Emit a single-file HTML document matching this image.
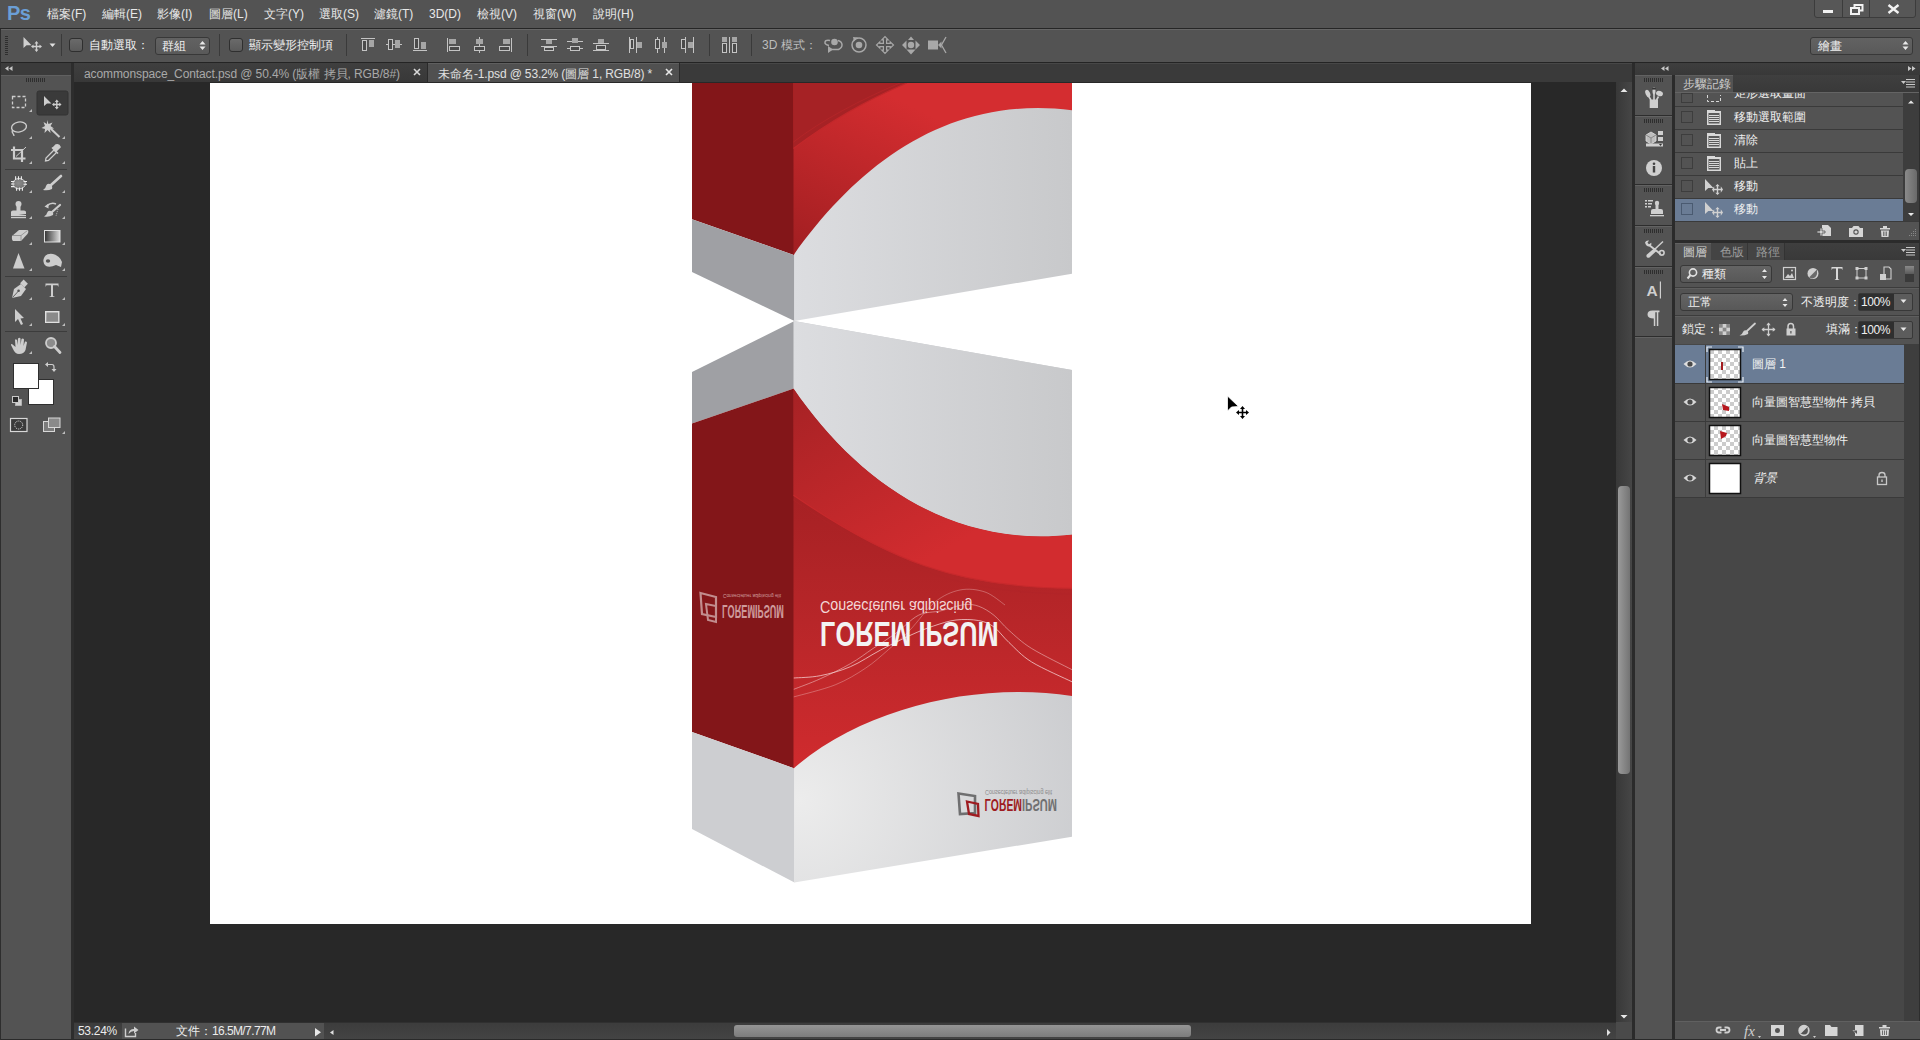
<!DOCTYPE html>
<html><head><meta charset="utf-8">
<style>
*{margin:0;padding:0;box-sizing:border-box}
html,body{width:1920px;height:1040px;overflow:hidden;background:#535353;font-family:"Liberation Sans",sans-serif;color:#e6e6e6}
.a{position:absolute}
.t{position:absolute;white-space:nowrap;font-size:12px;line-height:14px}
.k{display:inline-block;width:1em;text-align:center}
</style></head><body>
<!-- menu bar -->
<div class="a" style="left:0;top:0;width:1920px;height:28px;background:#535353"></div>
<div class="a" style="left:0;top:28px;width:1920px;height:1px;background:#262626"></div>
<!-- options bar -->
<div class="a" style="left:0;top:29px;width:1920px;height:33px;background:#535353;border-top:1px solid #666"></div>
<div class="a" style="left:0;top:62px;width:1920px;height:1px;background:#242424"></div>
<!-- MENU CONTENT -->
<div class="t" style="left:7px;top:2px;font-size:20px;line-height:22px;font-weight:bold;color:#6b9fd6;letter-spacing:-0.5px">Ps</div>
<div class="t" style="left:47px;top:7px;color:#e8e8e8"><span class="k">檔</span><span class="k">案</span>(F)</div>
<div class="t" style="left:102px;top:7px;color:#e8e8e8"><span class="k">編</span><span class="k">輯</span>(E)</div>
<div class="t" style="left:157px;top:7px;color:#e8e8e8"><span class="k">影</span><span class="k">像</span>(I)</div>
<div class="t" style="left:209px;top:7px;color:#e8e8e8"><span class="k">圖</span><span class="k">層</span>(L)</div>
<div class="t" style="left:264px;top:7px;color:#e8e8e8"><span class="k">文</span><span class="k">字</span>(Y)</div>
<div class="t" style="left:319px;top:7px;color:#e8e8e8"><span class="k">選</span><span class="k">取</span>(S)</div>
<div class="t" style="left:374px;top:7px;color:#e8e8e8"><span class="k">濾</span><span class="k">鏡</span>(T)</div>
<div class="t" style="left:429px;top:7px;color:#e8e8e8">3D(D)</div>
<div class="t" style="left:477px;top:7px;color:#e8e8e8"><span class="k">檢</span><span class="k">視</span>(V)</div>
<div class="t" style="left:533px;top:7px;color:#e8e8e8"><span class="k">視</span><span class="k">窗</span>(W)</div>
<div class="t" style="left:593px;top:7px;color:#e8e8e8"><span class="k">說</span><span class="k">明</span>(H)</div>
<!-- window controls -->
<div class="a" style="left:1814px;top:-2px;width:102px;height:20px;background:#575757;border:1px solid #3c3c3c;border-radius:0 0 3px 3px"></div>
<div class="a" style="left:1842px;top:0;width:1px;height:18px;background:#3c3c3c"></div>
<div class="a" style="left:1869px;top:0;width:1px;height:18px;background:#3c3c3c"></div>
<div class="a" style="left:1823px;top:10px;width:10px;height:3px;background:#f2f2f2"></div>
<svg class="a" style="left:1850px;top:4px" width="14" height="11" viewBox="0 0 14 11"><rect x="4.5" y="1" width="8" height="5.5" fill="none" stroke="#f2f2f2" stroke-width="2"/><rect x="1" y="4" width="8" height="6" fill="#575757" stroke="#f2f2f2" stroke-width="2"/></svg>
<svg class="a" style="left:1887px;top:4px" width="13" height="10" viewBox="0 0 13 10"><path d="M1.5,1 L11.5,9 M11.5,1 L1.5,9" stroke="#f2f2f2" stroke-width="2.4"/></svg>
<!-- OPTIONS CONTENT -->
<div class="a" style="left:5px;top:36px;width:3px;height:20px;background:repeating-linear-gradient(#2e2e2e 0 1px,transparent 1px 2px)"></div>
<svg class="a" style="left:22px;top:36px" width="22" height="16" viewBox="0 0 22 16"><path d="M1.5,1 L1.5,12 L4.5,9.3 L9.5,9.3 Z" fill="#cfcfcf"/><path d="M14.5,5 L16.5,7.5 L15.2,7.5 L15.2,9.8 L17.5,9.8 L17.5,8.5 L20,10.5 L17.5,12.5 L17.5,11.2 L15.2,11.2 L15.2,13.5 L16.5,13.5 L14.5,16 L12.5,13.5 L13.8,13.5 L13.8,11.2 L11.5,11.2 L11.5,12.5 L9,10.5 L11.5,8.5 L11.5,9.8 L13.8,9.8 L13.8,7.5 L12.5,7.5 Z" fill="#cfcfcf"/></svg>
<svg class="a" style="left:49px;top:43px" width="7" height="5" viewBox="0 0 7 5"><path d="M0.5,0.5 L6.5,0.5 L3.5,4 Z" fill="#e0e0e0"/></svg>
<div class="a" style="left:61px;top:34px;width:1px;height:22px;background:#3a3a3a"></div>
<div class="a" style="left:69px;top:38px;width:14px;height:14px;background:linear-gradient(#6a6a6a,#5a5a5a);border:1px solid #2f2f2f;border-radius:3px"></div>
<div class="t" style="left:89px;top:38px;color:#f0f0f0"><span class="k">自</span><span class="k">動</span><span class="k">選</span><span class="k">取</span><span class="k">：</span></div>
<div class="a" style="left:155px;top:37px;width:55px;height:18px;background:linear-gradient(#626262,#595959);border:1px solid #383838;border-radius:3px"></div>
<div class="t" style="left:162px;top:39px;color:#f0f0f0"><span class="k">群</span><span class="k">組</span></div>
<svg class="a" style="left:199px;top:40px" width="7" height="11" viewBox="0 0 7 11"><path d="M0.5,4.5 L3.5,1 L6.5,4.5 Z M0.5,6.5 L3.5,10 L6.5,6.5 Z" fill="#e8e8e8"/></svg>
<div class="a" style="left:219px;top:34px;width:1px;height:22px;background:#3a3a3a"></div>
<div class="a" style="left:229px;top:38px;width:14px;height:14px;background:linear-gradient(#6a6a6a,#5a5a5a);border:1px solid #2f2f2f;border-radius:3px"></div>
<div class="t" style="left:249px;top:38px;color:#f0f0f0"><span class="k">顯</span><span class="k">示</span><span class="k">變</span><span class="k">形</span><span class="k">控</span><span class="k">制</span><span class="k">項</span></div>
<div class="a" style="left:346px;top:34px;width:1px;height:22px;background:#3a3a3a"></div>
<div class="a" style="left:527px;top:34px;width:1px;height:22px;background:#3a3a3a"></div>
<div class="a" style="left:709px;top:34px;width:1px;height:22px;background:#3a3a3a"></div>
<div class="a" style="left:751px;top:34px;width:1px;height:22px;background:#3a3a3a"></div>
<div class="t" style="left:762px;top:38px;color:#bdbdbd">3D <span class="k">模</span><span class="k">式</span><span class="k">：</span></div>
<div class="a" style="left:1810px;top:37px;width:103px;height:18px;background:linear-gradient(#626262,#595959);border:1px solid #383838;border-radius:3px"></div>
<div class="t" style="left:1818px;top:39px;color:#f0f0f0"><span class="k">繪</span><span class="k">畫</span></div>
<svg class="a" style="left:1902px;top:40px" width="7" height="11" viewBox="0 0 7 11"><path d="M0.5,4.5 L3.5,1 L6.5,4.5 Z M0.5,6.5 L3.5,10 L6.5,6.5 Z" fill="#e8e8e8"/></svg>
<!-- ALIGN ICONS -->
<svg class="a" style="left:355px;top:30px" width="400" height="30" viewBox="355 30 400 30" shape-rendering="crispEdges">
<g fill="none" stroke="#c4c4c4" stroke-width="1">
<!-- 1 align top -->
<line x1="361" y1="38.5" x2="375" y2="38.5"/><rect x="362.5" y="40.5" width="4" height="10" fill="#4a4a4a"/>
<!-- 2 v center -->
<line x1="386" y1="44.5" x2="402" y2="44.5"/><rect x="388.5" y="39.5" width="4" height="10" fill="#4a4a4a"/>
<!-- 3 bottom -->
<line x1="413" y1="50.5" x2="427" y2="50.5"/><rect x="414.5" y="38.5" width="4" height="10" fill="#4a4a4a"/>
<!-- 4 left -->
<line x1="447.5" y1="38" x2="447.5" y2="52"/><rect x="449.5" y="46.5" width="10" height="4" fill="#4a4a4a"/>
<!-- 5 h center -->
<line x1="479.5" y1="37" x2="479.5" y2="53"/><rect x="474.5" y="46.5" width="10" height="4" fill="#4a4a4a"/>
<!-- 6 right -->
<line x1="511.5" y1="38" x2="511.5" y2="52"/><rect x="499.5" y="46.5" width="10" height="4" fill="#4a4a4a"/>
<!-- 7 dist top -->
<line x1="541" y1="39.5" x2="557" y2="39.5"/><line x1="541" y1="46.5" x2="557" y2="46.5"/><rect x="544.5" y="47.5" width="9" height="3" fill="#4a4a4a"/>
<line x1="567" y1="41.5" x2="583" y2="41.5"/><line x1="567" y1="48.5" x2="583" y2="48.5"/><rect x="570.5" y="46.5" width="9" height="4" fill="#4a4a4a"/>
<line x1="593" y1="43.5" x2="609" y2="43.5"/><line x1="593" y1="50.5" x2="609" y2="50.5"/><rect x="596.5" y="45.5" width="9" height="4" fill="#4a4a4a"/>
<!-- dist h -->
<line x1="629.5" y1="37" x2="629.5" y2="53"/><line x1="636.5" y1="37" x2="636.5" y2="53"/><rect x="630.5" y="39.5" width="3" height="9" fill="#4a4a4a"/>
<line x1="657.5" y1="37" x2="657.5" y2="53"/><line x1="664.5" y1="37" x2="664.5" y2="53"/><rect x="655.5" y="39.5" width="4" height="9" fill="#4a4a4a"/>
<line x1="685.5" y1="37" x2="685.5" y2="53"/><line x1="693.5" y1="37" x2="693.5" y2="53"/><rect x="681.5" y="39.5" width="4" height="9" fill="#4a4a4a"/>
<!-- auto align -->
<rect x="722.5" y="43.5" width="4" height="9" fill="#4a4a4a"/><rect x="732.5" y="43.5" width="4" height="9" fill="#4a4a4a"/><line x1="729.5" y1="37" x2="729.5" y2="53"/>
</g>
<g fill="#a6a6a6">
<rect x="369" y="40" width="5" height="7"/>
<rect x="395" y="40" width="5" height="8"/>
<rect x="421" y="42" width="5" height="7"/>
<rect x="449" y="39" width="7" height="5"/>
<rect x="476" y="39" width="7" height="5"/>
<rect x="503" y="39" width="7" height="5"/>
<rect x="546" y="40" width="6" height="4"/>
<rect x="572" y="38" width="6" height="5"/>
<rect x="598" y="39" width="6" height="4"/>
<rect x="637" y="42" width="5" height="6"/>
<rect x="662" y="42" width="5" height="6"/>
<rect x="688" y="42" width="5" height="6"/>
<rect x="722" y="37" width="5" height="5"/><rect x="732" y="37" width="5" height="5"/>
</g>
</svg>
<svg class="a" style="left:820px;top:34px" width="130" height="22" viewBox="820 34 130 22">
<g fill="none" stroke="#a8a8a8" stroke-width="1.5">
<path d="M829,45.5 C823,44 824,39.5 830,40.5 M838,40.5 C843,42 843.5,47 838.5,49.5 L831,49.5"/>
<circle cx="859" cy="45" r="7"/>
<path d="M883.4,43.4 L883.4,39.8 L881.8,39.8 L885.0,36.5 L888.2,39.8 L886.6,39.8 L886.6,43.4 L890.2,43.4 L890.2,41.8 L893.5,45.0 L890.2,48.2 L890.2,46.6 L886.6,46.6 L886.6,50.2 L888.2,50.2 L885.0,53.5 L881.8,50.2 L883.4,50.2 L883.4,46.6 L879.8,46.6 L879.8,48.2 L876.5,45.0 L879.8,41.8 L879.8,43.4 Z" stroke-width="1.2"/>
</g>
<g fill="#a8a8a8">
<circle cx="834.5" cy="42" r="3.3"/><path d="M828,46 L833,49.5 L828,53 Z"/>
<circle cx="859" cy="45" r="3.3"/><path d="M853,37 L858,37.5 L854,41.5 Z"/>
<circle cx="911" cy="45" r="3.2"/><path d="M902,45 L906.5,40.5 L906.5,49.5 Z M920,45 L915.5,40.5 L915.5,49.5 Z M911,36.5 L908,40 L914,40 Z M911,54.5 L906.5,49.5 L915.5,49.5 Z"/>
<rect x="928" y="40.5" width="10" height="9"/><path d="M938,45 L941.5,41.5 L941.5,48.5 Z"/><path d="M946,37 L941.5,45 L946,53" fill="none" stroke="#a8a8a8" stroke-width="1.3"/>
</g>
</svg>
<!-- main area dark -->
<div class="a" style="left:0;top:63px;width:1920px;height:977px;background:#2d2d2d"></div>
<!-- left toolbar -->
<div class="a" style="left:0;top:63px;width:71px;height:12px;background:#3b3b3b"></div>
<div class="a" style="left:1px;top:75px;width:70px;height:965px;background:#535353;border-top:1px solid #606060"></div>
<!-- TOOLBAR ICONS -->
<svg class="a" style="left:0;top:63px" width="72" height="380" viewBox="0 63 72 380">
<defs>
<linearGradient id="tg" x1="0" y1="0" x2="0" y2="1"><stop offset="0" stop-color="#dedede"/><stop offset="1" stop-color="#b4b4b4"/></linearGradient>
<linearGradient id="tg2" x1="0" y1="0" x2="1" y2="0"><stop offset="0" stop-color="#333"/><stop offset="1" stop-color="#ddd"/></linearGradient>
</defs>
<!-- header arrows -->
<path d="M8.5,66 L5,68.5 L8.5,71 Z M12.5,66 L9,68.5 L12.5,71 Z" fill="#c8c8c8"/>
<!-- grip -->
<g fill="#2e2e2e"><rect x="26" y="78" width="19" height="4" fill="url(#grip)"/></g>
<!-- separators -->
<rect x="5" y="169" width="62" height="1" fill="#3c3c3c"/>
<rect x="5" y="276" width="62" height="1" fill="#3c3c3c"/>
<rect x="5" y="331" width="62" height="1" fill="#3c3c3c"/>
<!-- selected move bg -->
<rect x="37" y="91" width="31" height="24" rx="2" fill="#3a3a3a" stroke="#333" stroke-width="1"/>
<!-- marquee -->
<rect x="12.5" y="96.5" width="13" height="11" fill="none" stroke="#cdcdcd" stroke-width="1.3" stroke-dasharray="3,2"/>
<!-- move -->
<path d="M44,96 L44,106 L47,103.5 L51.5,103.5 Z" fill="#cdcdcd"/>
<path d="M56.8,99.5 L58.8,102 L57.5,102 L57.5,103.8 L59.3,103.8 L59.3,102.5 L61.5,104.5 L59.3,106.5 L59.3,105.2 L57.5,105.2 L57.5,107 L58.8,107 L56.8,109.5 L54.8,107 L56.1,107 L56.1,105.2 L54.3,105.2 L54.3,106.5 L52,104.5 L54.3,102.5 L54.3,103.8 L56.1,103.8 L56.1,102 L54.8,102 Z" fill="#cdcdcd"/>
<!-- lasso -->
<ellipse cx="19" cy="127" rx="7.5" ry="5" fill="none" stroke="#cdcdcd" stroke-width="1.4" transform="rotate(-10 19 127)"/>
<path d="M12.5,130 C11,133 14,133 14,136" fill="none" stroke="#cdcdcd" stroke-width="1.3"/>
<!-- wand -->
<path d="M49,127 L59.5,137" stroke="#cdcdcd" stroke-width="2"/>
<path d="M47,120 L48.5,124 L52.5,122.5 L50.5,126 L54,128.5 L50,129 L50.5,133 L47.5,130 L44.5,133 L45,129 L41.5,128 L45,126 L43.5,122 L47,124 Z" fill="#cdcdcd"/>
<!-- crop -->
<path d="M14,146.5 L14,158.5 L25.5,158.5 M11,150 L22,150 L22,162" fill="none" stroke="#cdcdcd" stroke-width="2.2"/>
<path d="M16,156.5 L26,147" stroke="#cdcdcd" stroke-width="1"/>
<!-- eyedropper -->
<path d="M45.5,161 L46,158 L54,150 L56.5,152.5 L48.5,160.5 Z" fill="none" stroke="#cdcdcd" stroke-width="1.3"/>
<path d="M53,148 L56,145 Q59,144 60,147 L57,150 Z M52,147.5 L58,153.5" fill="#cdcdcd" stroke="#cdcdcd" stroke-width="1.6"/>
<!-- healing -->
<defs><radialGradient id="hg" cx="0.45" cy="0.45" r="0.6"><stop offset="0" stop-color="#8c8c8c"/><stop offset="1" stop-color="#707070"/></radialGradient></defs>
<ellipse cx="19.1" cy="183.7" rx="6.3" ry="5.2" fill="url(#hg)" stroke="#d0d0d0" stroke-width="1"/>
<path d="M15.6,176.3 L15.6,179.8 M18.5,176.3 L18.5,179.8 M21.4,176.3 L21.4,179.8 M16.6,187.6 L16.6,190.8 M19.5,187.6 L19.5,190.8 M22.4,187.6 L22.4,190.8 M11,181.5 L14.5,181.5 M11,184 L14.5,184 M11,186.6 L14.5,186.6 M23.5,181.5 L27,181.5 M23.5,184.3 L27,184.3" stroke="#eeeeee" stroke-width="1.1"/>
<!-- brush -->
<path d="M61,176 L51,185" stroke="#cdcdcd" stroke-width="2.6" stroke-linecap="round"/>
<path d="M50,184 Q53,186 52,189 Q48,191 43,190 Q46,188 46,186 Q47,183 50,184 Z" fill="#cdcdcd"/>
<!-- stamp -->
<circle cx="18.5" cy="204" r="3" fill="#cdcdcd"/><rect x="16.5" y="205" width="4" height="6" fill="#cdcdcd"/>
<path d="M11,216 L11,212 Q11,210.5 13,210.5 L24,210.5 Q26,210.5 26,212 L26,214 Z" fill="#cdcdcd"/>
<rect x="11" y="215" width="15" height="1.2" fill="#cdcdcd"/><rect x="11" y="217" width="15" height="1.2" fill="#cdcdcd"/>
<!-- history brush -->
<path d="M47,206 Q51,202 56,204" fill="none" stroke="#cdcdcd" stroke-width="1.5"/><path d="M44.5,206.5 L48.5,203.5 L48.5,208.5 Z" fill="#cdcdcd"/>
<path d="M60,205 L52,212" stroke="#cdcdcd" stroke-width="2.2" stroke-linecap="round"/>
<path d="M51,211 Q54,212.5 53,215 Q49,217.5 44,216.5 Q47,214.5 47,213 Q48,210 51,211 Z" fill="#cdcdcd"/>
<path d="M58,209 L56,216" stroke="#cdcdcd" stroke-width="0.8" stroke-dasharray="1,1"/>
<!-- eraser -->
<path d="M12,236 L19,230 L28,230 Q29,232 27.5,234 L21,241 L13,241 Q11.5,240 12,236 Z" fill="#cdcdcd"/>
<path d="M13,235.5 L21,235.5 L27.5,230.5 M21,235.5 L21,241" fill="none" stroke="#8a8a8a" stroke-width="0.8"/>
<!-- gradient -->
<rect x="44.5" y="230.5" width="15.5" height="11.5" fill="url(#tg2)" stroke="#e0e0e0" stroke-width="1"/>
<!-- blur triangle -->
<path d="M18.5,253 L24.5,268.5 L13,268.5 Z" fill="#cdcdcd"/>
<!-- dodge/smudge -->
<path d="M44,258 Q46,253 53,254 Q60,256 62,262 L61,267 L56,265 Q50,268 46,266 Q42,263 44,258 Z" fill="#cdcdcd"/>
<ellipse cx="48" cy="261" rx="2.2" ry="1.8" fill="#535353"/>
<!-- pen -->
<path d="M12,298 L14,289 L21,284 L26,289 L21,296 Z" fill="#cdcdcd"/>
<rect x="21" y="281" width="6" height="5" transform="rotate(45 24 283.5)" fill="#cdcdcd"/>
<path d="M12.5,297.5 L18.5,291" stroke="#535353" stroke-width="0.9"/><circle cx="18.6" cy="290.8" r="1.3" fill="#535353"/>
<!-- type T -->
<path d="M45.5,283.5 L58.5,283.5 L58.5,287 L57.5,285.3 L53,285.3 L53,296 L55,297 L49,297 L51,296 L51,285.3 L46.5,285.3 L45.5,287 Z" fill="#cdcdcd"/>
<!-- path select -->
<path d="M15,309 L15,322 L18,319 L21,325 L23,324 L20.5,318.5 L24,318 Z" fill="#cdcdcd"/>
<!-- rect shape -->
<rect x="45.5" y="311.5" width="13.5" height="11" fill="url(#tg)" stroke="#e0e0e0" stroke-width="1"/>
<rect x="46.5" y="312.5" width="11.5" height="9" fill="#8a8a8a"/>
<!-- hand -->
<path d="M12,344 L15.5,347 L15,340 Q15.5,338.5 17,340 L17.5,345 L18,338.5 Q19.5,337 20.5,338.5 L20.5,345 L21.5,339 Q23,338 24,339.5 L23.5,346 L25,341.5 Q26.5,341 27,342.5 L25.5,350 Q24,354 19,354 Q15,354 13,349 L11,345 Q11,343.5 12,344 Z" fill="#cdcdcd"/>
<!-- zoom -->
<circle cx="51" cy="343" r="5" fill="#8c8c8c" stroke="#cdcdcd" stroke-width="1.8"/>
<path d="M54.5,346.5 L60,352.5" stroke="#cdcdcd" stroke-width="2.8" stroke-linecap="round"/>
<!-- colors -->
<rect x="28.5" y="379.5" width="25" height="25" fill="#fff" stroke="#2f2f2f" stroke-width="1"/>
<rect x="13.5" y="363.5" width="25" height="25" fill="#fff" stroke="#2f2f2f" stroke-width="1"/>
<path d="M46,364.5 L52,364.5 Q54,364.5 54,367 L54,370" fill="none" stroke="#cdcdcd" stroke-width="1.2"/>
<path d="M45,364.5 L48,362 L48,367 Z M54,372 L51.5,369 L56.5,369 Z" fill="#cdcdcd"/>
<rect x="15.5" y="399.5" width="6" height="6" fill="#d0d0d0" stroke="#bbb" stroke-width="0.8"/>
<rect x="12.5" y="396.5" width="6" height="6" fill="#2a2a2a" stroke="#c8c8c8" stroke-width="1"/>
<!-- quick mask -->
<rect x="10.5" y="418.5" width="16.5" height="13" fill="#3a3a3a" stroke="#d8d8d8" stroke-width="1.2"/>
<circle cx="18.7" cy="425" r="4" fill="none" stroke="#e8e8e8" stroke-width="1" stroke-dasharray="1,1"/>
<!-- screen mode -->
<rect x="43.5" y="421.5" width="11" height="10" fill="#7c7c7c" stroke="#d8d8d8" stroke-width="1"/>
<rect x="48.5" y="418" width="11.5" height="9.5" fill="#8a8a8a" stroke="#d8d8d8" stroke-width="1"/>
<!-- corner triangles -->
<g fill="#bdbdbd">
<path d="M32,112 L32,109 L29,112 Z"/>
<path d="M32,139 L32,136 L29,139 Z"/><path d="M65,139 L65,136 L62,139 Z"/>
<path d="M32,164 L32,161 L29,164 Z"/><path d="M65,164 L65,161 L62,164 Z"/>
<path d="M32,193 L32,190 L29,193 Z"/><path d="M65,193 L65,190 L62,193 Z"/>
<path d="M32,219 L32,216 L29,219 Z"/><path d="M65,219 L65,216 L62,219 Z"/>
<path d="M32,245 L32,242 L29,245 Z"/><path d="M65,245 L65,242 L62,245 Z"/>
<path d="M32,271 L32,268 L29,271 Z"/><path d="M65,271 L65,268 L62,271 Z"/>
<path d="M32,300 L32,297 L29,300 Z"/><path d="M65,300 L65,297 L62,300 Z"/>
<path d="M32,326 L32,323 L29,326 Z"/><path d="M65,326 L65,323 L62,326 Z"/>
<path d="M32,354 L32,351 L29,354 Z"/>
<path d="M65,434 L65,431 L62,434 Z"/>
</g>
</svg>
<div class="a" style="left:26px;top:78px;width:19px;height:4px;background:repeating-linear-gradient(90deg,#2e2e2e 0 1px,transparent 1px 2px)"></div>
<!-- tab bar -->
<div class="a" style="left:74px;top:63px;width:1558px;height:19px;background:#3a3a3a;border-top:1px solid #474747"></div>
<div class="a" style="left:74px;top:63px;width:353px;height:19px;background:linear-gradient(#3f3f3f,#383838)"></div>
<div class="a" style="left:427px;top:63px;width:1px;height:19px;background:#2a2a2a"></div>
<div class="a" style="left:428px;top:63px;width:251px;height:19px;background:#505050;border-top:1px solid #5f5f5f"></div>
<div class="a" style="left:679px;top:63px;width:1px;height:19px;background:#2a2a2a"></div>
<div class="t" style="left:84px;top:67px;font-size:12px;color:#a9a9a9;letter-spacing:-0.1px">acommonspace_Contact.psd @ 50.4% (<span class="k">版</span><span class="k">權</span> <span class="k">拷</span><span class="k">貝</span>, RGB/8#)</div>
<div class="t" style="left:438px;top:67px;font-size:12px;color:#e0e0e0;letter-spacing:-0.15px"><span class="k">未</span><span class="k">命</span><span class="k">名</span>-1.psd @ 53.2% (<span class="k">圖</span><span class="k">層</span> 1, RGB/8) *</div>
<svg class="a" style="left:413px;top:68px" width="8" height="8" viewBox="0 0 8 8"><path d="M1,1 L7,7 M7,1 L1,7" stroke="#d8d8d8" stroke-width="1.6"/></svg>
<svg class="a" style="left:665px;top:68px" width="8" height="8" viewBox="0 0 8 8"><path d="M1,1 L7,7 M7,1 L1,7" stroke="#e8e8e8" stroke-width="1.6"/></svg>
<!-- doc area -->
<div class="a" style="left:74px;top:82px;width:1542px;height:940px;background:#282828"></div>
<!-- canvas -->
<div class="a" style="left:210px;top:83px;width:1321px;height:841px;background:#fff"></div>
<!-- BOX -->
<svg class="a" style="left:210px;top:83px" width="1321" height="841" viewBox="210 83 1321 841">
<defs>
<linearGradient id="gf" gradientUnits="userSpaceOnUse" x1="793" y1="0" x2="1072" y2="0"><stop offset="0" stop-color="#dcdde0"/><stop offset="1" stop-color="#c8c9cb"/></linearGradient>
<linearGradient id="rf" gradientUnits="userSpaceOnUse" x1="800" y1="250" x2="880" y2="90"><stop offset="0" stop-color="#a31f22"/><stop offset="1" stop-color="#d42d30"/></linearGradient>
<linearGradient id="rf2" gradientUnits="userSpaceOnUse" x1="800" y1="395" x2="900" y2="575"><stop offset="0" stop-color="#a82225"/><stop offset="1" stop-color="#d22c2f"/></linearGradient>
<linearGradient id="rf3" gradientUnits="userSpaceOnUse" x1="0" y1="500" x2="0" y2="770"><stop offset="0" stop-color="#a72124"/><stop offset="0.45" stop-color="#b82629"/><stop offset="1" stop-color="#d02b2e"/></linearGradient>
<radialGradient id="gb" gradientUnits="userSpaceOnUse" cx="800" cy="800" r="300"><stop offset="0" stop-color="#ececec"/><stop offset="1" stop-color="#cbcccf"/></radialGradient>
</defs>
<!-- upper left face -->
<polygon points="692,83 794.5,83 794.5,255.2 692,219.2" fill="#831619"/>
<polygon points="692,219.2 794.5,255.2 794.5,321 692,272" fill="#9fa0a4"/>
<!-- upper front face -->
<polygon points="794.2,83 1072,83 1072,273.7 794.2,320.9" fill="url(#gf)"/>
<path d="M793.5,83 L1072,83 L1072,110.2 C950,95.1 860.1,161.7 793.5,255.2 Z" fill="url(#rf)"/>
<path d="M793.5,83 L907,83 C866.4,100.1 828.6,122 793.5,148.5 Z" fill="#a62225"/>
<path d="M907,83 C866.4,100.1 828.6,122 793.5,148.5" fill="none" stroke="#c3282b" stroke-width="1.2"/>
<path d="M900,83 C860,100 822,120 793.5,142" fill="none" stroke="#b82629" stroke-width="1" opacity="0.7"/>
<!-- lower left face -->
<polygon points="692,372 794.5,321 794.5,388.2 692,423.5" fill="#9fa0a4"/>
<polygon points="692,423.5 794.5,388.2 794.5,768.4 692,732" fill="#831619"/>
<polygon points="692,732 794.5,768.4 794.5,882.6 692,829" fill="#cdced1"/>
<!-- lower front face -->
<polygon points="794.2,321.1 1072,370 1072,836.7 794.2,882.5" fill="url(#gb)"/>
<path d="M793.5,388.2 C857.3,481.5 952,548.1 1072,534.4 L1072,695.9 C978.6,682 866.5,706 793.5,768.4 Z" fill="url(#rf3)"/>
<path d="M793.5,388.2 C857.3,481.5 952,548.1 1072,534.4 L1072,588.3 C955.4,587.2 888.5,560.2 793.5,495.3 Z" fill="url(#rf2)"/>
<path d="M793.5,495.3 C888.5,560.2 955.4,587.2 1072,588.3" fill="none" stroke="#c6292c" stroke-width="1.2"/>
<path d="M793.5,500 C888.5,566 955.4,593 1072,594" fill="none" stroke="#b02427" stroke-width="1" opacity="0.5"/>
<path d="M793.5,321 L1072,370 L1072,534.4 C952,548.1 857.3,481.5 793.5,388.2 Z" fill="url(#gf)"/>
<!-- wave lines -->
<g fill="none" stroke="#f6d4d4" stroke-width="1">
<path opacity="0.75" d="M793.8,678.0 C798.2,677.6 810.8,677.6 820.2,675.7 C829.6,673.8 840.3,671.0 850.4,666.7 C860.5,662.4 870.5,655.3 880.6,650.0 C890.7,644.7 902.2,639.0 911.0,635.0 C919.8,631.0 926.0,628.5 933.5,626.0 C941.0,623.5 948.5,620.9 956.0,620.0 C963.5,619.1 972.5,619.4 978.8,620.6 C985.1,621.8 989.0,623.4 994.0,627.0 C999.0,630.6 1002.7,636.7 1009.0,642.5 C1015.3,648.3 1021.2,655.5 1031.7,662.0 C1042.2,668.5 1065.3,678.5 1072.0,681.8"/>
<path opacity="0.5" d="M793.8,689.3 C798.2,687.5 810.8,683.1 820.2,678.8 C829.6,674.5 841.6,668.8 850.4,663.7 C859.2,658.7 865.5,653.5 873.0,648.5 C880.5,643.5 888.1,638.9 895.7,633.4 C903.3,627.9 910.9,619.1 918.4,615.3 C925.9,611.5 933.5,612.6 941.0,610.8 C948.5,609.0 957.4,605.5 963.7,604.7 C970.0,604.0 973.8,604.5 978.8,606.3 C983.8,608.1 989.0,611.3 994.0,615.3 C999.0,619.3 1002.7,624.9 1009.0,630.4 C1015.3,635.9 1021.2,642.0 1031.7,648.5 C1042.2,655.0 1065.3,666.2 1072.0,669.7"/>
<path opacity="0.35" d="M793.8,696.9 C800.7,694.9 823.3,689.6 835.3,684.8 C847.2,680.0 856.7,674.0 865.5,668.2 C874.3,662.4 880.6,656.4 888.0,650.0 C895.4,643.6 902.2,638.0 910.0,630.0 C917.8,622.0 926.7,608.7 935.0,602.0 C943.3,595.3 951.7,591.7 960.0,590.0 C968.3,588.3 977.5,589.5 985.0,592.0 C992.5,594.5 1001.7,602.8 1005.0,605.0"/>
</g>
<!-- main text (flipped) -->
<g transform="scale(1,-1)" fill="#f3f3f3">
<text x="820" y="-622" font-family="Liberation Sans" font-weight="bold" font-size="34.5" textLength="178.5" lengthAdjust="spacingAndGlyphs">LOREM IPSUM</text>
<text x="820" y="-600.5" font-family="Liberation Sans" font-size="17" fill="#f2d6d6" textLength="152.5" lengthAdjust="spacingAndGlyphs">Consectetuer adipiscing</text>
</g>
<!-- left face logo -->
<g opacity="0.9">
<path d="M700.5,593 L716,597 L716,617 L702,614 Z" fill="none" stroke="#c99a9b" stroke-width="2.2"/>
<path d="M706,604 L716,606 L716,622 L708,620 Z" fill="none" stroke="#c99a9b" stroke-width="2"/>
<g transform="scale(1,-1)" fill="#d7a9aa">
<text x="722" y="-604.5" font-family="Liberation Sans" font-weight="bold" font-size="18" textLength="62" lengthAdjust="spacingAndGlyphs">LOREMIPSUM</text>
<text x="723" y="-593.5" font-family="Liberation Sans" font-size="6" textLength="58" lengthAdjust="spacingAndGlyphs">Consectetuer adipiscing elit</text>
</g>
</g>
<!-- bottom logo -->
<path d="M958.5,793.5 L975,796 L975,813 L960,814 Z" fill="none" stroke="#6f6f70" stroke-width="2.6"/>
<path d="M967,801.5 L978,804 L978.5,816 L969,814 Z" fill="none" stroke="#9e1b20" stroke-width="2.3"/>
<g transform="scale(1,-1)">
<text x="984.5" y="-799" font-family="Liberation Sans" font-weight="bold" font-size="17" fill="#9e1b20" textLength="37.5" lengthAdjust="spacingAndGlyphs">LOREM</text>
<text x="1022" y="-799" font-family="Liberation Sans" font-weight="bold" font-size="17" fill="#707071" textLength="35" lengthAdjust="spacingAndGlyphs">IPSUM</text>
<text x="985" y="-789.5" font-family="Liberation Sans" font-size="6.5" fill="#8a8a8b" textLength="67" lengthAdjust="spacingAndGlyphs">Consectetuer adipiscing elit</text>
</g>
<!-- cursor -->
<path d="M1227.5,396 L1227.5,411 L1231.5,407 L1238.5,406.5 Z" fill="#000" stroke="#fff" stroke-width="0.8"/>
<g fill="#000">
<path d="M1242.5,406 L1245,409 L1243.3,409 L1243.3,411.8 L1246,411.8 L1246,410 L1249,412.5 L1246,415 L1246,413.2 L1243.3,413.2 L1243.3,416 L1245,416 L1242.5,419 L1240,416 L1241.7,416 L1241.7,413.2 L1239,413.2 L1239,415 L1236,412.5 L1239,410 L1239,411.8 L1241.7,411.8 L1241.7,409 L1240,409 Z"/>
</g>
</svg>
<!-- vscroll -->
<div class="a" style="left:1616px;top:82px;width:16px;height:940px;background:linear-gradient(90deg,#383838,#464646)"></div>

<!-- right dock -->
<div class="a" style="left:1632px;top:63px;width:3px;height:977px;background:#2b2b2b"></div>
<div class="a" style="left:1635px;top:63px;width:285px;height:12px;background:linear-gradient(#3e3e3e,#383838)"></div>
<svg class="a" style="left:1655px;top:63px" width="265" height="12" viewBox="1655 63 265 12"><path d="M1664.5,66 L1661,68.5 L1664.5,71 Z M1668.5,66 L1665,68.5 L1668.5,71 Z M1908,66 L1911.5,68.5 L1908,71 Z M1912,66 L1915.5,68.5 L1912,71 Z" fill="#c8c8c8"/></svg>
<!-- dock groups -->
<div class="a" style="left:1635px;top:75px;width:37px;height:40px;background:#535353;border-top:1px solid #626262"></div>
<div class="a" style="left:1635px;top:116px;width:37px;height:68px;background:#535353;border-top:1px solid #626262"></div>
<div class="a" style="left:1635px;top:185px;width:37px;height:40px;background:#535353;border-top:1px solid #626262"></div>
<div class="a" style="left:1635px;top:226px;width:37px;height:40px;background:#535353;border-top:1px solid #626262"></div>
<div class="a" style="left:1635px;top:267px;width:37px;height:69px;background:#535353;border-top:1px solid #626262"></div>
<div class="a" style="left:1635px;top:337px;width:37px;height:703px;background:#535353;border-top:1px solid #626262"></div>
<div class="a" style="left:1644px;top:78px;width:19px;height:4px;background:repeating-linear-gradient(90deg,#2e2e2e 0 1px,transparent 1px 2px)"></div>
<div class="a" style="left:1644px;top:119px;width:19px;height:4px;background:repeating-linear-gradient(90deg,#2e2e2e 0 1px,transparent 1px 2px)"></div>
<div class="a" style="left:1644px;top:188px;width:19px;height:4px;background:repeating-linear-gradient(90deg,#2e2e2e 0 1px,transparent 1px 2px)"></div>
<div class="a" style="left:1644px;top:229px;width:19px;height:4px;background:repeating-linear-gradient(90deg,#2e2e2e 0 1px,transparent 1px 2px)"></div>
<div class="a" style="left:1644px;top:270px;width:19px;height:4px;background:repeating-linear-gradient(90deg,#2e2e2e 0 1px,transparent 1px 2px)"></div>
<svg class="a" style="left:1635px;top:75px" width="37" height="265" viewBox="1635 75 37 265">
<!-- brushes -->
<rect x="1649.7" y="99.5" width="8.3" height="8.5" fill="#cfcfcf"/>
<path d="M1651,100 L1648.5,96 M1654,100 L1654,94 M1656.5,100 L1658.5,96.5" stroke="#cfcfcf" stroke-width="1.6"/>
<ellipse cx="1647.8" cy="93.5" rx="2.2" ry="3.8" transform="rotate(-25 1647.8 93.5)" fill="#cfcfcf"/>
<ellipse cx="1654" cy="91" rx="1.5" ry="3.5" fill="#cfcfcf"/><rect x="1652.2" y="88" width="3.6" height="1.6" fill="#333"/>
<ellipse cx="1659.5" cy="93.5" rx="3.5" ry="2.6" transform="rotate(20 1659.5 93.5)" fill="#cfcfcf"/>
<!-- 3D -->
<path d="M1646,135 L1651,132 L1656,135 L1656,141 L1651,144 L1646,141 Z" fill="#bdbdbd" stroke="#dcdcdc" stroke-width="0.8"/>
<path d="M1646,135 L1651,138 L1656,135 M1651,138 L1651,144" fill="none" stroke="#7a7a7a" stroke-width="0.8"/>
<rect x="1658" y="131" width="5" height="4" fill="#cfcfcf"/><rect x="1658" y="137" width="5" height="4" fill="#cfcfcf"/>
<rect x="1646" y="143.5" width="17" height="3" fill="#cfcfcf"/><path d="M1659,144 L1662,144 L1660.5,146 Z" fill="#333"/>
<!-- info -->
<circle cx="1654" cy="168" r="8" fill="#cfcfcf"/>
<circle cx="1654" cy="163.8" r="1.3" fill="#444"/><rect x="1652.8" y="166" width="2.4" height="6.5" fill="#444"/>
<!-- clone source -->
<g fill="#cfcfcf"><rect x="1645" y="200" width="2" height="1.5"/><rect x="1648" y="200" width="5" height="1.5"/><rect x="1645" y="203" width="2" height="1.5"/><rect x="1648" y="203" width="4" height="1.5"/><rect x="1645" y="206" width="2" height="1.5"/><rect x="1648" y="206" width="3" height="1.5"/>
<circle cx="1657" cy="203" r="2.2"/><rect x="1655.5" y="204" width="3" height="5"/><path d="M1651,214 L1651,211 Q1651,209 1653,209 L1661,209 Q1663,209 1663,211 L1663,214 Z"/><rect x="1650" y="215" width="14" height="1.3"/></g>
<!-- tools -->
<path d="M1649,245 L1660.5,254" stroke="#cfcfcf" stroke-width="2"/>
<path d="M1645,242.5 Q1646,240 1649,240.5 L1647.5,242.8 L1649,244.3 L1651.3,242.8 Q1652,246 1649,246.5 Q1646,246.5 1645,242.5 Z" fill="#cfcfcf"/>
<circle cx="1661.8" cy="252.8" r="2.3" fill="none" stroke="#cfcfcf" stroke-width="1.6"/>
<path d="M1663,241.5 L1654,250" stroke="#cfcfcf" stroke-width="1.5"/>
<path d="M1654.5,248 L1657,250.5 L1649.5,257.5 Q1647,258.5 1646.5,256.5 Q1646,255 1647.5,254 Z" fill="#cfcfcf"/>
<!-- A| -->
<text x="1646.5" y="295.5" font-family="Liberation Sans" font-weight="bold" font-size="15.5" fill="#cfcfcf">A</text><rect x="1659.8" y="281.5" width="1.2" height="17" fill="#cfcfcf"/>
<!-- pilcrow -->
<path d="M1652.5,310.5 L1659.5,310.5 L1659.5,312.3 L1658.3,312.3 L1658.3,326 L1656.8,326 L1656.8,312.3 L1655.3,312.3 L1655.3,326 L1653.8,326 L1653.8,318.5 Q1647.5,318.5 1647.5,314.5 Q1647.5,310.5 1652.5,310.5 Z" fill="#cfcfcf"/>
</svg>
<div class="a" style="left:1672px;top:75px;width:3px;height:965px;background:#2b2b2b"></div>
<!-- HISTORY PANEL -->
<div class="a" style="left:1675px;top:75px;width:244px;height:17px;background:linear-gradient(#3f3f3f,#393939)"></div>
<div class="a" style="left:1675px;top:75px;width:58px;height:18px;background:#535353;border-top:1px solid #606060"></div>
<div class="t" style="left:1683px;top:77px;color:#cfcfcf"><span class="k">步</span><span class="k">驟</span><span class="k">記</span><span class="k">錄</span></div>
<svg class="a" style="left:1900px;top:78px" width="16" height="10" viewBox="0 0 16 10"><path d="M1,3 L6,3 L3.5,6 Z" fill="#c8c8c8"/><path d="M6,1.5 L15,1.5 M6,4 L15,4 M6,6.5 L15,6.5 M6,9 L15,9" stroke="#c8c8c8" stroke-width="1"/></svg>
<div class="a" style="left:1675px;top:92px;width:244px;height:1px;background:#646464"></div>
<div class="a" style="left:1675px;top:93px;width:228px;height:128px;background:#535353"></div>
<div class="a" style="left:1903px;top:93px;width:16px;height:128px;background:#3d3d3d"></div>
<div class="a" style="left:1905px;top:169px;width:12px;height:34px;border-radius:4px;background:linear-gradient(90deg,#8a8a8a,#6a6a6a)"></div>
<svg class="a" style="left:1905px;top:98px" width="12" height="120" viewBox="0 0 12 120"><path d="M3,5.5 L9,5.5 L6,2.5 Z M3,115 L9,115 L6,118 Z" fill="#e8e8e8"/></svg>
<div class="a" style="left:1675px;top:106px;width:228px;height:1px;background:#3a3a3a"></div>
<div class="a" style="left:1675px;top:129px;width:228px;height:1px;background:#3a3a3a"></div>
<div class="a" style="left:1675px;top:152px;width:228px;height:1px;background:#3a3a3a"></div>
<div class="a" style="left:1675px;top:175px;width:228px;height:1px;background:#3a3a3a"></div>
<div class="a" style="left:1675px;top:198px;width:228px;height:1px;background:#3a3a3a"></div>
<div class="a" style="left:1675px;top:199px;width:228px;height:22px;background:#6a7c95"></div>
<svg class="a" style="left:1675px;top:93px" width="228" height="128" viewBox="1675 93 228 128">
<g fill="none" stroke-width="1">
<rect x="1681.5" y="93.5" width="11" height="9" stroke="#3d3d3d"/>
<rect x="1681.5" y="111.5" width="11" height="11" stroke="#3d3d3d"/>
<rect x="1681.5" y="134.5" width="11" height="11" stroke="#3d3d3d"/>
<rect x="1681.5" y="157.5" width="11" height="11" stroke="#3d3d3d"/>
<rect x="1681.5" y="180.5" width="11" height="11" stroke="#3d3d3d"/>
<rect x="1681.5" y="203.5" width="11" height="11" stroke="#4a5a70"/>
<path d="M1707.5,95 L1707.5,101.5 L1720.5,101.5 L1720.5,95" stroke="#d8d8d8" stroke-dasharray="3,2"/>
</g>
<g fill="#d8d8d8">
<path id="doc" d="M1707,110 L1715,110 L1715,111 L1721,111 L1721,125 L1707,125 Z"/>
<path d="M1707,133 L1715,133 L1715,134 L1721,134 L1721,148 L1707,148 Z"/>
<path d="M1707,156 L1715,156 L1715,157 L1721,157 L1721,171 L1707,171 Z"/>
</g>
<g fill="#5a5a5a">
<rect x="1708.5" y="113" width="11" height="10.5"/><rect x="1708.5" y="136" width="11" height="10.5"/><rect x="1708.5" y="159" width="11" height="10.5"/>
</g>
<g stroke="#d8d8d8" stroke-width="1">
<path d="M1709,115.5 L1719,115.5 M1709,117.5 L1719,117.5 M1709,119.5 L1719,119.5 M1709,121.5 L1719,121.5"/>
<path d="M1709,138.5 L1719,138.5 M1709,140.5 L1719,140.5 M1709,142.5 L1719,142.5 M1709,144.5 L1719,144.5"/>
<path d="M1709,161.5 L1719,161.5 M1709,163.5 L1719,163.5 M1709,165.5 L1719,165.5 M1709,167.5 L1719,167.5"/>
</g>
<g fill="#d0d0d0">
<path d="M1705,179 L1705,191 L1708.3,188 L1713.5,188 Z"/>
<path d="M1717.5,184.0 L1719.7,186.2 L1718.2,186.2 L1718.2,188.8 L1720.8,188.8 L1720.8,186.2 L1723.0,189.5 L1720.8,192.8 L1720.8,190.2 L1718.2,190.2 L1718.2,192.8 L1719.7,192.8 L1717.5,195.0 L1715.3,192.8 L1716.8,192.8 L1716.8,190.2 L1714.2,190.2 L1714.2,192.8 L1712.0,189.5 L1714.2,186.2 L1714.2,188.8 L1716.8,188.8 L1716.8,186.2 L1715.3,186.2 Z"/>
<path d="M1705,202 L1705,214 L1708.3,211 L1713.5,211 Z"/>
<path d="M1717.5,207.0 L1719.7,209.2 L1718.2,209.2 L1718.2,211.8 L1720.8,211.8 L1720.8,209.2 L1723.0,212.5 L1720.8,215.8 L1720.8,213.2 L1718.2,213.2 L1718.2,215.8 L1719.7,215.8 L1717.5,218.0 L1715.3,215.8 L1716.8,215.8 L1716.8,213.2 L1714.2,213.2 L1714.2,215.8 L1712.0,212.5 L1714.2,209.2 L1714.2,211.8 L1716.8,211.8 L1716.8,209.2 L1715.3,209.2 Z"/>
</g>
</svg>
<div class="a" style="left:1734px;top:93px;height:13px;width:120px;overflow:hidden"><div class="t" style="left:0;top:-7px;color:#f0f0f0"><span class="k">矩</span><span class="k">形</span><span class="k">選</span><span class="k">取</span><span class="k">畫</span><span class="k">面</span></div></div>
<div class="t" style="left:1734px;top:110px;color:#f0f0f0"><span class="k">移</span><span class="k">動</span><span class="k">選</span><span class="k">取</span><span class="k">範</span><span class="k">圍</span></div>
<div class="t" style="left:1734px;top:133px;color:#f0f0f0"><span class="k">清</span><span class="k">除</span></div>
<div class="t" style="left:1734px;top:156px;color:#f0f0f0"><span class="k">貼</span><span class="k">上</span></div>
<div class="t" style="left:1734px;top:179px;color:#f0f0f0"><span class="k">移</span><span class="k">動</span></div>
<div class="t" style="left:1734px;top:202px;color:#f0f0f0"><span class="k">移</span><span class="k">動</span></div>
<!-- history footer -->
<div class="a" style="left:1675px;top:221px;width:244px;height:19px;background:#535353;border-top:1px solid #3a3a3a"></div>
<svg class="a" style="left:1810px;top:222px" width="110" height="18" viewBox="1810 222 110 18">
<g fill="#d6d6d6">
<path d="M1822,225 L1828,225 L1831,228 L1831,236 L1822,236 Z"/><path d="M1817,231 L1820,231 L1820,228 L1822,228 L1822,231 L1825,231 L1825,233 L1822,233 L1822,236 L1820,236 L1820,233 L1817,233 Z" stroke="#535353" stroke-width="0.8"/>
<path d="M1849,228 L1852,228 L1853.5,226 L1858.5,226 L1860,228 L1863,228 L1863,237 L1849,237 Z"/>
<path d="M1880,228 L1890,228 L1890,229.5 L1880,229.5 Z M1883,226 L1887,226 L1887,228 L1883,228 Z M1881,230.5 L1889,230.5 L1888.5,237 L1881.5,237 Z"/>
</g>
<circle cx="1856" cy="232" r="2.7" fill="#535353"/><circle cx="1856" cy="232" r="1.6" fill="#d6d6d6"/>
<path d="M1883.5,231.5 L1883.5,236 M1885,231.5 L1885,236 M1886.5,231.5 L1886.5,236" stroke="#535353" stroke-width="0.7"/>
<g fill="#888"><rect x="1915" y="229" width="1" height="1"/><rect x="1913" y="231" width="1" height="1"/><rect x="1915" y="231" width="1" height="1"/><rect x="1911" y="233" width="1" height="1"/><rect x="1913" y="233" width="1" height="1"/><rect x="1915" y="233" width="1" height="1"/><rect x="1909" y="235" width="1" height="1"/><rect x="1911" y="235" width="1" height="1"/><rect x="1913" y="235" width="1" height="1"/><rect x="1915" y="235" width="1" height="1"/></g>
</svg>
<div class="a" style="left:1675px;top:240px;width:245px;height:3px;background:#2b2b2b"></div>
<!-- LAYERS PANEL -->
<div class="a" style="left:1675px;top:243px;width:244px;height:17px;background:linear-gradient(#3f3f3f,#393939)"></div>
<div class="a" style="left:1711px;top:243px;width:74px;height:17px;background:#444;border-right:1px solid #333"></div>
<div class="a" style="left:1747px;top:243px;width:1px;height:17px;background:#363636"></div>
<div class="a" style="left:1675px;top:243px;width:36px;height:17px;background:#535353;border-top:1px solid #606060"></div>
<div class="t" style="left:1683px;top:245px;color:#d4d4d4"><span class="k">圖</span><span class="k">層</span></div>
<div class="t" style="left:1720px;top:245px;color:#9c9c9c"><span class="k">色</span><span class="k">版</span></div>
<div class="t" style="left:1756px;top:245px;color:#9c9c9c"><span class="k">路</span><span class="k">徑</span></div>
<svg class="a" style="left:1900px;top:246px" width="16" height="10" viewBox="0 0 16 10"><path d="M1,3 L6,3 L3.5,6 Z" fill="#c8c8c8"/><path d="M6,1.5 L15,1.5 M6,4 L15,4 M6,6.5 L15,6.5 M6,9 L15,9" stroke="#c8c8c8" stroke-width="1"/></svg>
<div class="a" style="left:1675px;top:260px;width:244px;height:84px;background:#535353"></div>
<div class="a" style="left:1675px;top:287px;width:244px;height:1px;background:#3c3c3c"></div>
<div class="a" style="left:1675px;top:288px;width:244px;height:1px;background:#5e5e5e"></div>
<div class="a" style="left:1675px;top:315px;width:244px;height:1px;background:#3c3c3c"></div>
<div class="a" style="left:1675px;top:316px;width:244px;height:1px;background:#5e5e5e"></div>
<!-- filter -->
<div class="a" style="left:1680px;top:265px;width:92px;height:18px;background:linear-gradient(#646464,#585858);border:1px solid #383838;border-radius:3px"></div>
<div class="t" style="left:1702px;top:267px;color:#f0f0f0"><span class="k">種</span><span class="k">類</span></div>
<svg class="a" style="left:1680px;top:265px" width="240" height="20" viewBox="1680 265 240 20">
<circle cx="1693" cy="272.5" r="3.6" fill="none" stroke="#e0e0e0" stroke-width="1.6"/><path d="M1690.5,275 L1687.5,278.5" stroke="#e0e0e0" stroke-width="2"/>
<path d="M1762,272 L1764.5,269 L1767,272 Z M1762,276 L1764.5,279 L1767,276 Z" fill="#e8e8e8"/>
<rect x="1783.5" y="267.5" width="12" height="12" fill="none" stroke="#cfcfcf" stroke-width="1.2"/><path d="M1785,278 L1788,274 L1790,276 L1792,273 L1794,278 Z" fill="#cfcfcf"/><circle cx="1792" cy="270.5" r="1" fill="#cfcfcf"/>
<circle cx="1813" cy="273.5" r="5.5" fill="#cfcfcf"/><path d="M1809,277.5 L1817,269.5 L1817,274 Q1816,278 1812,278.5 Z" fill="#6a6a6a"/>
<path d="M1831.5,267 L1842.5,267 L1842.5,270 L1841.5,268.5 L1838,268.5 L1838,279 L1839.5,280 L1834.5,280 L1836,279 L1836,268.5 L1832.5,268.5 L1831.5,270 Z" fill="#d8d8d8"/>
<rect x="1857" y="268.5" width="9" height="9.5" fill="none" stroke="#cfcfcf" stroke-width="1"/><g fill="#cfcfcf"><rect x="1855.5" y="267" width="3" height="3"/><rect x="1864.5" y="267" width="3" height="3"/><rect x="1855.5" y="276.5" width="3" height="3"/><rect x="1864.5" y="276.5" width="3" height="3"/></g>
<path d="M1884,267 L1889,267 L1891,269 L1891,279 L1884,279 Z" fill="none" stroke="#cfcfcf" stroke-width="1.1"/><rect x="1880" y="274" width="6" height="6" fill="#cfcfcf"/>
<rect x="1905" y="266" width="9" height="16" fill="url(#tgl)"/>
<defs><linearGradient id="tgl" x1="0" y1="0" x2="0" y2="1"><stop offset="0" stop-color="#8a8a8a"/><stop offset="0.5" stop-color="#5a5a5a"/><stop offset="0.5" stop-color="#3a3a3a"/><stop offset="1" stop-color="#3a3a3a"/></linearGradient></defs>
</svg>
<!-- blend -->
<div class="a" style="left:1680px;top:293px;width:113px;height:18px;background:linear-gradient(#646464,#585858);border:1px solid #383838;border-radius:3px"></div>
<div class="t" style="left:1688px;top:295px;color:#f0f0f0"><span class="k">正</span><span class="k">常</span></div>
<svg class="a" style="left:1782px;top:295px" width="6" height="14" viewBox="0 0 6 14"><path d="M0.5,6 L3,3 L5.5,6 Z M0.5,9 L3,12 L5.5,9 Z" fill="#e8e8e8"/></svg>
<div class="t" style="left:1801px;top:295px;color:#f0f0f0"><span class="k">不</span><span class="k">透</span><span class="k">明</span><span class="k">度</span><span class="k">：</span></div>
<div class="a" style="left:1858px;top:293px;width:55px;height:18px;background:#5c5c5c;border:1px solid #383838;border-radius:2px"></div>
<div class="a" style="left:1859px;top:294px;width:35px;height:16px;background:#2f2f2f"></div>
<div class="t" style="left:1861px;top:295px;color:#f0f0f0;font-size:12px;letter-spacing:-0.4px">100%</div>
<svg class="a" style="left:1900px;top:299px" width="7" height="5" viewBox="0 0 7 5"><path d="M0.5,0.5 L6.5,0.5 L3.5,4 Z" fill="#e8e8e8"/></svg>
<!-- lock -->
<div class="t" style="left:1682px;top:322px;color:#f0f0f0"><span class="k">鎖</span><span class="k">定</span><span class="k">：</span></div>
<svg class="a" style="left:1715px;top:319px" width="90" height="20" viewBox="1715 319 90 20">
<rect x="1719" y="324" width="11" height="11" fill="#d0d0d0"/><g fill="#888"><rect x="1719" y="324" width="3.7" height="3.7"/><rect x="1726.3" y="324" width="3.7" height="3.7"/><rect x="1722.7" y="327.7" width="3.7" height="3.7"/><rect x="1719" y="331.3" width="3.7" height="3.7"/><rect x="1726.3" y="331.3" width="3.7" height="3.7"/></g>
<path d="M1755,323.5 L1747,331" stroke="#cfcfcf" stroke-width="1.8" stroke-linecap="round"/><path d="M1746.5,330.5 Q1749,332 1748,334 Q1744,336 1739.5,335.5 Q1742.5,334 1743,332 Q1744,329.5 1746.5,330.5 Z" fill="#cfcfcf"/>
<path d="M1768.5,323 L1768.5,336 M1762,329.5 L1775,329.5" stroke="#cfcfcf" stroke-width="1.3"/><path d="M1768.5,322.5 L1766.3,325.3 L1770.7,325.3 Z M1768.5,336.5 L1766.3,333.7 L1770.7,333.7 Z M1761.5,329.5 L1764.3,327.3 L1764.3,331.7 Z M1775.5,329.5 L1772.7,327.3 L1772.7,331.7 Z" fill="#cfcfcf"/>
<path d="M1788,329 L1788,326.5 Q1788,323.5 1790.8,323.5 Q1793.5,323.5 1793.5,326.5 L1793.5,329" fill="none" stroke="#cfcfcf" stroke-width="1.5"/><rect x="1786.5" y="328.5" width="9" height="7" fill="#cfcfcf"/><rect x="1790.3" y="331" width="1.2" height="2.5" fill="#535353"/>
</svg>
<div class="t" style="left:1826px;top:322px;color:#f0f0f0"><span class="k">填</span><span class="k">滿</span><span class="k">：</span></div>
<div class="a" style="left:1858px;top:321px;width:55px;height:18px;background:#5c5c5c;border:1px solid #383838;border-radius:2px"></div>
<div class="a" style="left:1859px;top:322px;width:35px;height:16px;background:#2f2f2f"></div>
<div class="t" style="left:1861px;top:323px;color:#f0f0f0;font-size:12px;letter-spacing:-0.4px">100%</div>
<svg class="a" style="left:1900px;top:327px" width="7" height="5" viewBox="0 0 7 5"><path d="M0.5,0.5 L6.5,0.5 L3.5,4 Z" fill="#e8e8e8"/></svg>
<!-- layer list -->
<div class="a" style="left:1675px;top:344px;width:229px;height:677px;background:#474747"></div>
<div class="a" style="left:1904px;top:344px;width:15px;height:677px;background:#3e3e3e"></div>
<div class="a" style="left:1675px;top:345px;width:229px;height:38px;background:#6a7c95"></div>
<div class="a" style="left:1675px;top:384px;width:229px;height:37px;background:#535353"></div>
<div class="a" style="left:1675px;top:422px;width:229px;height:37px;background:#535353"></div>
<div class="a" style="left:1675px;top:460px;width:229px;height:37px;background:#535353"></div>
<div class="a" style="left:1705px;top:345px;width:1px;height:152px;background:#3c3c3c"></div>
<div class="a" style="left:1675px;top:383px;width:229px;height:1px;background:#3a3a3a"></div>
<div class="a" style="left:1675px;top:421px;width:229px;height:1px;background:#3a3a3a"></div>
<div class="a" style="left:1675px;top:459px;width:229px;height:1px;background:#3a3a3a"></div>
<div class="a" style="left:1675px;top:497px;width:229px;height:1px;background:#3a3a3a"></div>
<svg class="a" style="left:1675px;top:344px" width="229" height="155" viewBox="1675 344 229 155">
<defs>
<pattern id="chk" x="1710" y="350" width="8" height="8" patternUnits="userSpaceOnUse"><rect width="8" height="8" fill="#fff"/><rect width="4" height="4" fill="#cccccc"/><rect x="4" y="4" width="4" height="4" fill="#cccccc"/></pattern>
</defs>
<g id="eyes">
<path d="M1683.5,364 Q1690,357 1696.5,364 Q1690,371 1683.5,364 Z" fill="#e0e0e0"/><circle cx="1690" cy="364" r="2.6" fill="#4a4a4a"/>
<path d="M1683.5,402 Q1690,395 1696.5,402 Q1690,409 1683.5,402 Z" fill="#d8d8d8"/><circle cx="1690" cy="402" r="2.6" fill="#4a4a4a"/>
<path d="M1683.5,440 Q1690,433 1696.5,440 Q1690,447 1683.5,440 Z" fill="#d8d8d8"/><circle cx="1690" cy="440" r="2.6" fill="#4a4a4a"/>
<path d="M1683.5,478 Q1690,471 1696.5,478 Q1690,485 1683.5,478 Z" fill="#d8d8d8"/><circle cx="1690" cy="478" r="2.6" fill="#4a4a4a"/>
</g>
<rect x="1709.5" y="349.5" width="31" height="30" fill="url(#chk)" stroke="#111" stroke-width="1.5"/>
<rect x="1721" y="362" width="2" height="8" fill="#a31c20"/>
<path d="M1707,352 L1707,347 L1712,347 M1738,347 L1743,347 L1743,352 M1743,377 L1743,382 L1738,382 M1712,382 L1707,382 L1707,377" fill="none" stroke="#e8eef5" stroke-width="1.2"/>
<rect x="1709.5" y="387.5" width="31" height="30" fill="url(#chk)" stroke="#111" stroke-width="1.5"/>
<path d="M1722,404 L1729,407 L1729,411 L1723,410 Z" fill="#b7181e"/>
<rect x="1709.5" y="425.5" width="31" height="30" fill="url(#chk)" stroke="#111" stroke-width="1.5"/>
<path d="M1720,431 L1727,433 L1726,436 L1721,439 Z" fill="#b7181e"/>
<rect x="1709.5" y="463.5" width="31" height="30" fill="#fff" stroke="#111" stroke-width="1.5"/>
<path d="M1879,477 L1879,475 Q1879,472.5 1882,472.5 Q1885,472.5 1885,475 L1885,477" fill="none" stroke="#c8c8c8" stroke-width="1.3"/><rect x="1877.5" y="477" width="9" height="7.5" fill="none" stroke="#c8c8c8" stroke-width="1.3"/><rect x="1881.3" y="479.5" width="1.4" height="2.5" fill="#c8c8c8"/>
</svg>
<div class="t" style="left:1752px;top:357px;color:#f4f4f4"><span class="k">圖</span><span class="k">層</span> 1</div>
<div class="t" style="left:1752px;top:395px;color:#f0f0f0"><span class="k">向</span><span class="k">量</span><span class="k">圖</span><span class="k">智</span><span class="k">慧</span><span class="k">型</span><span class="k">物</span><span class="k">件</span> <span class="k">拷</span><span class="k">貝</span></div>
<div class="t" style="left:1752px;top:433px;color:#f0f0f0"><span class="k">向</span><span class="k">量</span><span class="k">圖</span><span class="k">智</span><span class="k">慧</span><span class="k">型</span><span class="k">物</span><span class="k">件</span></div>
<div class="t" style="left:1752px;top:471px;color:#f0f0f0;transform:skewX(-14deg);transform-origin:0 100%"><span class="k">背</span><span class="k">景</span></div>
<!-- layers footer -->
<div class="a" style="left:1675px;top:1021px;width:245px;height:19px;background:#535353;border-top:1px solid #606060"></div>
<svg class="a" style="left:1710px;top:1022px" width="190" height="18" viewBox="1710 1022 190 18">
<g fill="none" stroke="#cfcfcf" stroke-width="1.8">
<path d="M1721.5,1027.5 L1719,1027.5 Q1716.5,1027.5 1716.5,1030 Q1716.5,1032.5 1719,1032.5 L1721.5,1032.5 M1724.5,1027.5 L1727,1027.5 Q1729.5,1027.5 1729.5,1030 Q1729.5,1032.5 1727,1032.5 L1724.5,1032.5 M1720,1030 L1726,1030"/>
<circle cx="1804" cy="1030.5" r="4.8"/>
</g>
<text x="1744" y="1036" font-family="Liberation Serif" font-style="italic" font-size="15" fill="#cfcfcf">fx</text>
<path d="M1758,1036 L1761,1036 L1759.5,1038 Z M1813,1036 L1816,1036 L1814.5,1038 Z" fill="#cfcfcf"/>
<rect x="1771" y="1025" width="13" height="11" fill="#d6d6d6"/><circle cx="1777.5" cy="1030.5" r="2.5" fill="#535353"/>
<path d="M1800.5,1034 L1807.5,1027" stroke="#535353" stroke-width="1"/><path d="M1800.5,1034 L1807.5,1027 A4.8,4.8 0 0 0 1800.5,1034 Z" fill="#cfcfcf"/>
<path d="M1825,1025 L1830,1025 L1831.5,1027 L1837.5,1027 L1837.5,1036 L1825,1036 Z" fill="#d6d6d6"/>
<path d="M1855,1025 L1863.5,1025 L1863.5,1036 L1855,1036 Z" fill="#d6d6d6"/><path d="M1852.5,1030 L1855.5,1030 L1855.5,1033.5 Z" fill="#d6d6d6"/><path d="M1853,1030.5 L1857,1034 L1857,1030.5 Z" fill="#535353"/>
<path d="M1879,1027 L1890,1027 L1890,1028.5 L1879,1028.5 Z M1882.5,1025 L1886.5,1025 L1886.5,1027 L1882.5,1027 Z M1880,1029.5 L1889,1029.5 L1888.5,1036 L1880.5,1036 Z" fill="#d6d6d6"/>
<path d="M1882.5,1030.5 L1882.5,1035 M1884.5,1030.5 L1884.5,1035 M1886.5,1030.5 L1886.5,1035" stroke="#535353" stroke-width="0.8"/>
</svg>
<!-- STATUS BAR -->
<div class="a" style="left:74px;top:1022px;width:1558px;height:18px;background:linear-gradient(#3c3c3c,#444)"></div>
<div class="a" style="left:74px;top:1022px;width:1542px;height:1px;background:#303030"></div>
<div class="a" style="left:122px;top:1023px;width:202px;height:17px;background:#525252"></div>
<div class="t" style="left:78px;top:1024px;font-size:12px;color:#ececec;letter-spacing:-0.3px">53.24%</div>
<svg class="a" style="left:124px;top:1025px" width="16" height="13" viewBox="0 0 16 13"><path d="M1.5,3.5 L1.5,11.5 L11.5,11.5 L11.5,8" fill="none" stroke="#cfcfcf" stroke-width="1.4"/><path d="M4.5,9 Q5,4 10,4 L10,1.5 L14.5,5 L10,8.5 L10,6 Q7,6 4.5,9 Z" fill="#cfcfcf"/></svg>
<div class="t" style="left:176px;top:1024px;font-size:12px;color:#ececec;letter-spacing:-0.6px"><span class="k">文</span><span class="k">件</span><span class="k">：</span>16.5M/7.77M</div>
<svg class="a" style="left:314px;top:1027px" width="40" height="11" viewBox="314 1027 40 11"><path d="M315,1028 L321,1032.3 L315,1036.6 Z" fill="#e8e8e8"/><path d="M333.5,1030 L330,1032.5 L333.5,1035 Z" fill="#e0e0e0"/></svg>
<div class="a" style="left:734px;top:1025px;width:457px;height:12px;border-radius:3px;background:linear-gradient(#959595,#7c7c7c)"></div>
<svg class="a" style="left:1604px;top:1027px" width="10" height="11" viewBox="0 0 10 11"><path d="M3,2 L6.5,5.5 L3,9 Z" fill="#e0e0e0"/></svg>
<div class="a" style="left:1616px;top:1022px;width:16px;height:18px;background:#4a4a4a"></div>
<!-- vscroll thumb -->
<div class="a" style="left:1618px;top:486px;width:12px;height:288px;border-radius:4px;background:linear-gradient(90deg,#9a9a9a,#747474)"></div>
<svg class="a" style="left:1616px;top:83px" width="16" height="940" viewBox="0 0 16 940"><path d="M4.5,9 L11.5,9 L8,5.5 Z M4.5,932 L11.5,932 L8,935.5 Z" fill="#e8e8e8"/></svg>
<div class="a" style="left:0;top:1039px;width:1920px;height:1px;background:#2a2a2a"></div>
<div class="a" style="left:0;top:29px;width:1px;height:1011px;background:#2e2e2e"></div>
</body></html>
